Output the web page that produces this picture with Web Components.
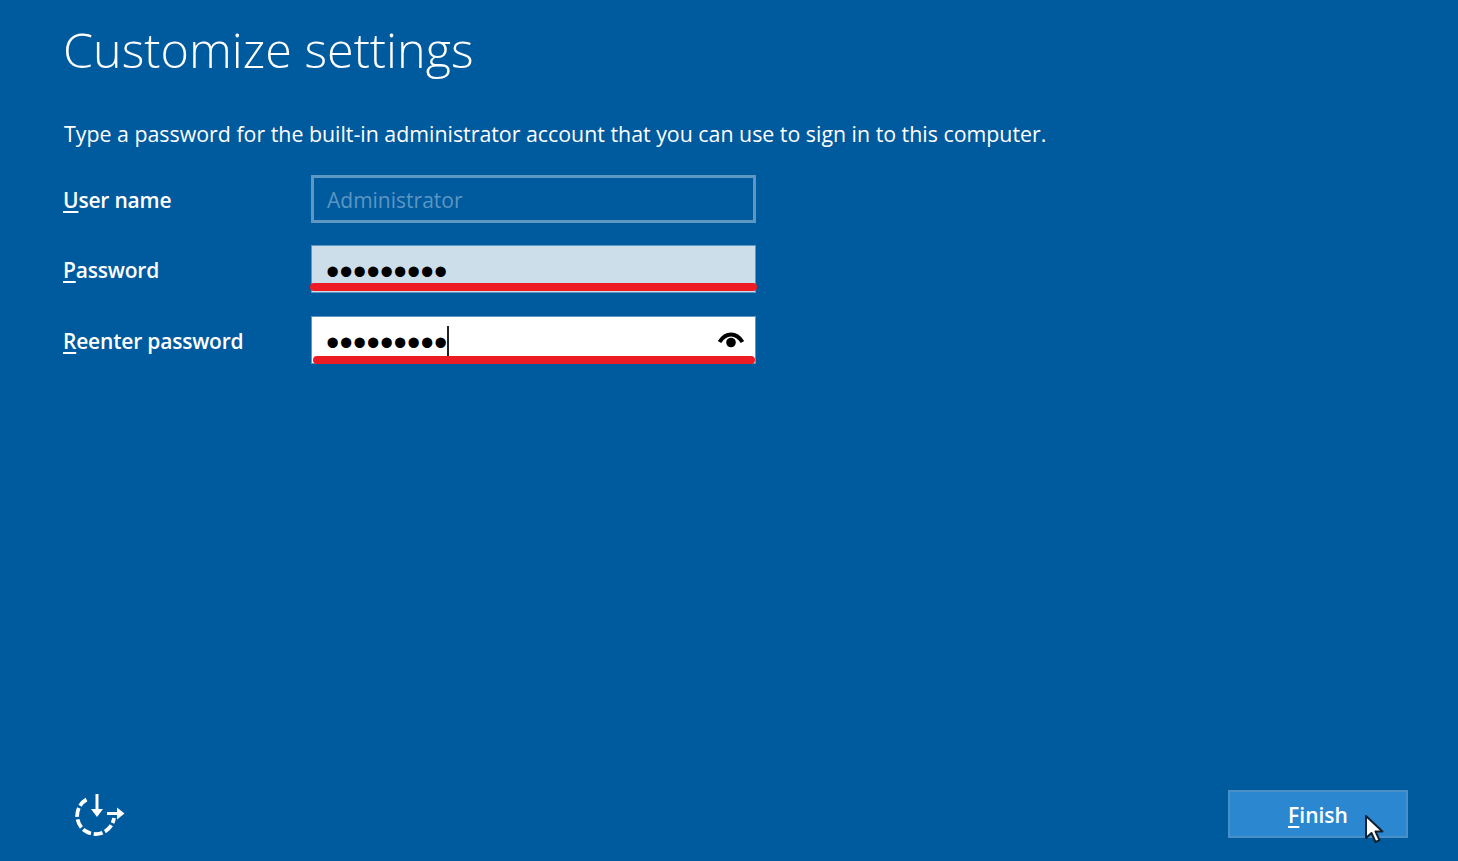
<!DOCTYPE html>
<html lang="en">
<head>
<meta charset="utf-8">
<title>Customize settings</title>
<style>
    html, body {
        margin: 0;
        height: 100%;
    }
    body {
        background: #005a9e;
        color: #fff;
        font-family: "Open Sans", "Noto Sans", sans-serif;
    }
</style>
</head>
<body>
<setup-page>
    <span slot="title">Customize settings</span>
    <span slot="intro">Type a password for the built-in administrator account that you can use to sign in to this computer.</span>
    <setup-field key-letter="U" label="ser name" state="disabled" value="Administrator"></setup-field>
    <setup-field key-letter="P" label="assword" state="filled" value="•••••••••" mark="first"></setup-field>
    <setup-field key-letter="R" label="eenter password" state="focused" value="•••••••••" mark="second"></setup-field>
    <accessibility-icon slot="footer-left"></accessibility-icon>
    <finish-button slot="footer-right"></finish-button>
</setup-page>

<script>
class SetupPage extends HTMLElement {
    constructor() {
        super();
        this.attachShadow({ mode: "open" });
        this.shadowRoot.innerHTML = `
            <style>
                :host {
                    display: flex;
                    flex-direction: column;
                    height: 861px;
                    box-sizing: border-box;
                    padding: 0 50px 23px 63px;
                    overflow: hidden;
                }
                h1 {
                    margin: 14px 0 0;
                    font-size: 48.5px;
                    line-height: 70px;
                    font-weight: 300;
                }
                p {
                    margin: 36px 0 26.8px 1px;
                    font-size: 21.35px;
                    line-height: 28px;
                }
                main {
                    flex: 1;
                    display: flex;
                    flex-direction: column;
                    gap: 22.5px;
                }
                footer {
                    display: flex;
                    justify-content: space-between;
                    align-items: flex-end;
                }
            </style>
            <h1><slot name="title"></slot></h1>
            <p><slot name="intro"></slot></p>
            <main><slot></slot></main>
            <footer>
                <slot name="footer-left"></slot>
                <slot name="footer-right"></slot>
            </footer>
        `;
    }
}

class SetupField extends HTMLElement {
    constructor() {
        super();
        this.attachShadow({ mode: "open" });
    }

    connectedCallback() {
        const state = this.getAttribute("state");
        const mark = this.getAttribute("mark");
        const isDots = state !== "disabled";
        this.shadowRoot.innerHTML = `
            <style>
                :host {
                    display: grid;
                    grid-template-columns: 248px 445px;
                    align-items: center;
                }
                label {
                    font-size: 21px;
                    font-weight: 600;
                    line-height: 28px;
                    letter-spacing: -0.2px;
                    position: relative;
                    top: 1px;
                }
                u {
                    text-underline-offset: 3px;
                }
                .box {
                    position: relative;
                    box-sizing: border-box;
                    height: 48px;
                    display: flex;
                    align-items: center;
                    justify-content: space-between;
                    padding: 0 16px;
                    border: 1px solid #5e97c2;
                    font-size: 21px;
                }
                .disabled {
                    border: 3px solid #5e97c2;
                    padding: 2px 13px 0;
                    color: #5b96c3;
                    background: #005a9e;
                }
                .filled {
                    background: #cddeeb;
                    color: #000;
                }
                .focused {
                    background: #fff;
                    color: #000;
                }
                .dots {
                    font-family: "Liberation Sans", sans-serif;
                    font-size: 38px;
                    letter-spacing: 0.2px;
                    line-height: 30px;
                    margin-left: -2px;
                    margin-top: 6px;
                    white-space: nowrap;
                }
                .caret {
                    position: absolute;
                    left: 135px;
                    top: 9px;
                    width: 2px;
                    height: 30px;
                    background: #222;
                }
                svg {
                    display: block;
                    margin-right: -6px;
                    margin-top: 1px;
                }
                .mark {
                    position: absolute;
                    background: #ed1c24;
                    border-radius: 4px;
                    height: 8px;
                }
                .first {
                    left: -2px;
                    right: -2px;
                    top: 37px;
                }
                .second {
                    left: 1px;
                    right: 0;
                    top: 39px;
                }
            </style>
            <label><u>${this.getAttribute("key-letter")}</u>${this.getAttribute("label")}</label>
            <div class="box ${state}">
                <span class="${isDots ? "dots" : ""}">${this.getAttribute("value")}</span>
                ${state === "focused" ? `
                    <span class="caret"></span>
                    <svg width="28" height="20" viewBox="0 0 28 20" aria-hidden="true">
                        <path d="M2.500 12C6 6.500 10 4.500 14 4.500s8 2 11.500 7.500" fill="none" stroke="#000" stroke-width="4"/>
                        <circle cx="14" cy="12.500" r="4.800" fill="#000"/>
                    </svg>` : ""}
                ${mark ? `<span class="mark ${mark}"></span>` : ""}
            </div>
        `;
    }
}

class AccessibilityIcon extends HTMLElement {
    constructor() {
        super();
        this.attachShadow({ mode: "open" });
        this.shadowRoot.innerHTML = `
            <style>
                :host {
                    display: block;
                    margin: 0 0 0 12px;
                    line-height: 0;
                }
            </style>
            <svg width="50" height="44" viewBox="0 0 50 44" fill="none" stroke="#fff" aria-hidden="true">
                <path d="M11.500 5.500 A18.500 18.500 0 1 0 39 24" stroke-width="3.800" stroke-dasharray="9 2.600"/>
                <path d="M22 0v19" stroke-width="3"/>
                <path d="M16 15h12L22 23z" fill="#fff" stroke="none"/>
                <path d="M32 19.500h12" stroke-width="3"/>
                <path d="M42 13.500L49.500 19.500 42 25.500z" fill="#fff" stroke="none"/>
            </svg>
        `;
    }
}

class FinishButton extends HTMLElement {
    constructor() {
        super();
        this.attachShadow({ mode: "open" });
        this.shadowRoot.innerHTML = `
            <style>
                :host {
                    display: block;
                    position: relative;
                }
                button {
                    display: block;
                    box-sizing: border-box;
                    width: 180px;
                    height: 48px;
                    padding: 2px 0 0;
                    border: 2px solid #4a90c8;
                    background: #2b88d0;
                    color: #fff;
                    font: 600 21px/28px "Open Sans", "Noto Sans", sans-serif;
                }
                u {
                    text-underline-offset: 3px;
                }
                svg {
                    position: absolute;
                    left: 136px;
                    top: 24px;
                }
            </style>
            <button><u>F</u>inish</button>
            <svg width="20" height="30" viewBox="0 0 20 30" aria-hidden="true">
                <path d="M2 2v22l5.500-5 4 9 4-1.800-4-8.700H18.500z" fill="#fff" stroke="#10202e" stroke-width="2" stroke-linejoin="round"/>
            </svg>
        `;
    }
}

customElements.define("setup-page", SetupPage);
customElements.define("setup-field", SetupField);
customElements.define("accessibility-icon", AccessibilityIcon);
customElements.define("finish-button", FinishButton);
</script>
</body>
</html>
